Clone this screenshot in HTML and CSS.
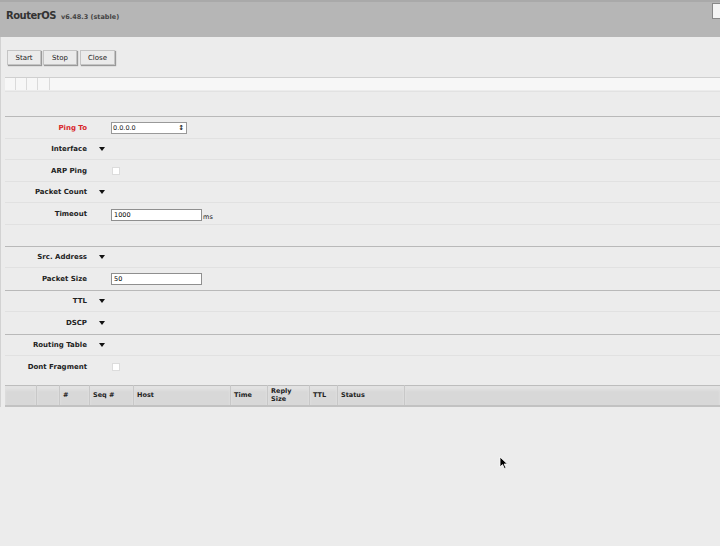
FILE: index.html
```html
<html>
<head>
    <meta charset="UTF-8">
    <title>RouterOS</title>
    <link rel="stylesheet" href="styles.css">
</head>
<body>

<header id="titlebar">
    <span class="brand">RouterOS</span>
    <span class="version">v6.48.3 (stable)</span>
    <div class="corner"></div>
</header>

<div id="page">
    <div class="buttons">
        <button type="button">Start</button>
        <button type="button">Stop</button>
        <button type="button">Close</button>
    </div>

    <div class="tabs">
        <span></span><span></span><span></span><span></span>
    </div>

    <div class="blank"></div>

    <form id="form">
        <div class="section">
            <div class="row">
                <label class="req">Ping To</label>
                <span></span>
                <div class="select"><span>0.0.0.0</span><i>&#8597;</i></div>
            </div>
            <div class="row">
                <label>Interface</label>
                <span class="tri"></span>
                <span></span>
            </div>
            <div class="row">
                <label>ARP Ping</label>
                <span></span>
                <span class="check"></span>
            </div>
            <div class="row">
                <label>Packet Count</label>
                <span class="tri"></span>
                <span></span>
            </div>
            <div class="row">
                <label>Timeout</label>
                <span></span>
                <div><input type="text" value="1000"> <span class="unit">ms</span></div>
            </div>
            <div class="row empty"></div>
        </div>

        <div class="section">
            <div class="row">
                <label>Src. Address</label>
                <span class="tri"></span>
                <span></span>
            </div>
            <div class="row">
                <label>Packet Size</label>
                <span></span>
                <div><input type="text" value="50"></div>
            </div>
        </div>

        <div class="section">
            <div class="row">
                <label>TTL</label>
                <span class="tri"></span>
                <span></span>
            </div>
            <div class="row">
                <label>DSCP</label>
                <span class="tri"></span>
                <span></span>
            </div>
        </div>

        <div class="section">
            <div class="row">
                <label>Routing Table</label>
                <span class="tri"></span>
                <span></span>
            </div>
            <div class="row">
                <label>Dont Fragment</label>
                <span></span>
                <span class="check"></span>
            </div>
        </div>
    </form>

    <table>
        <thead>
        <tr>
            <th class="c1"></th>
            <th class="c2"></th>
            <th class="c3">#</th>
            <th class="c4">Seq #</th>
            <th class="c5">Host</th>
            <th class="c6">Time</th>
            <th class="c7">Reply<br>Size</th>
            <th class="c8">TTL</th>
            <th class="c9">Status</th>
            <th></th>
        </tr>
        </thead>
    </table>
</div>

<svg class="cursor" width="10" height="14" viewBox="0 0 10 14">
    <path d="M1 1 L1 11 L3.5 8.6 L5.4 12.6 L7 11.9 L5.1 8 L8.4 8 Z" fill="#000" stroke="#fff" stroke-width="0.8"/>
</svg>

</body>
</html>
```

FILE: styles.css
```css
body {
    margin: 0;
    background-color: #ececec;
    font-family: "DejaVu Sans", Verdana, sans-serif;
    width: 720px;
    height: 546px;
    overflow: hidden;
    position: relative;
}

#titlebar {
    height: 37px;
    box-sizing: border-box;
    background-color: #b6b6b6;
    border-top: 2px solid #a9a9a9;
    padding: 2px 0 0 6px;
    position: relative;
}
.brand {
    font-size: 10px;
    font-weight: bold;
    color: #333;
    letter-spacing: -0.5px;
}
.version {
    font-size: 6.5px;
    font-weight: bold;
    color: #444;
}
.corner {
    position: absolute;
    right: 0;
    top: 1px;
    width: 7px;
    height: 14px;
    background: #f4f4f4;
    border: 1px solid #888;
    border-right: none;
}

#page {
    padding-left: 4px;
    border-left: 1px solid #d2d2d2;
}

.buttons {
    display: flex;
    gap: 2px;
    padding-top: 13px;
    padding-left: 2px;
    height: 16px;
}
.buttons button {
    font-family: "DejaVu Sans", Verdana, sans-serif;
    font-size: 7px;
    color: #222;
    background: #ebebeb;
    border: 1px solid #c4c4c4;
    box-shadow: 1px 1px 1px #999;
    height: 15px;
    padding: 0;
    width: 34px;
}
.buttons button:nth-child(3) {
    margin-left: 1px;
    width: 35px;
}

.tabs {
    margin-top: 11px;
    height: 12px;
    border-top: 1px solid #cfcfcf;
    background: #f7f7f7;
    display: flex;
}
.tabs span {
    width: 10px;
    border-right: 1px solid #dadada;
}
.tabs span:last-child {
    width: 11px;
}

.blank {
    height: 24px;
    border-top: 1px solid #e2e2e2;
    margin-top: 1px;
}

form {
    margin: 0;
}
.section {
    border-top: 1px solid #b9b9b9;
}
.row {
    display: grid;
    grid-template-columns: 82px 24px 1fr;
    align-items: center;
    height: 21.5px;
    border-bottom: 1px solid #e1e1e1;
    box-sizing: border-box;
    padding-top: 1px;
}
.section .row:last-child {
    border-bottom: none;
}
.row.empty {
    height: 21px;
}
.row label {
    text-align: right;
    font-size: 7px;
    font-weight: bold;
    color: #222;
}
.row label.req {
    color: #d8262a;
}

.tri {
    margin-left: 12px;
    width: 0;
    height: 0;
    border-left: 3.5px solid transparent;
    border-right: 3.5px solid transparent;
    border-top: 4px solid #111;
}

.check {
    margin-left: 1px;
    width: 6px;
    height: 6px;
    background: #fff;
    border: 1px solid #dcdcdc;
}

.select {
    width: 73px;
    height: 10px;
    background: #fff;
    border: 1px solid #999;
    display: flex;
    justify-content: space-between;
    align-items: center;
    font-size: 6.5px;
    color: #222;
    padding-left: 1px;
}
.select i {
    font-style: normal;
    font-size: 7px;
    font-weight: bold;
    padding-right: 2px;
}

.row input {
    width: 91px;
    height: 12px;
    box-sizing: border-box;
    border: 1px solid #8f8f8f;
    font-family: "DejaVu Sans", Verdana, sans-serif;
    font-size: 6.5px;
    padding: 0 2px;
    vertical-align: middle;
}
.unit {
    font-size: 6.5px;
    color: #222;
    margin-left: -4px;
}

table {
    margin-top: 7px;
    width: 715px;
    table-layout: fixed;
    border-collapse: collapse;
    background: #d8d8d8;
    border-top: 1px solid #bdbdbd;
    border-bottom: 2px solid #c2c2c2;
}
th {
    height: 21px;
    padding: 0 0 0 3px;
    text-align: left;
    font-size: 6.5px;
    font-weight: bold;
    color: #222;
    line-height: 8px;
    border-right: 1px solid #c8c8c8;
    box-shadow: inset 0 4px 3px #e2e2e2;
}
th:last-child {
    border-right: none;
}
.c1 { width: 28px; }
.c2 { width: 19px; }
.c3 { width: 26px; }
.c4 { width: 40px; }
.c5 { width: 93px; }
.c6 { width: 33px; }
.c7 { width: 38px; }
.c8 { width: 24px; }
.c9 { width: 63px; }

.cursor {
    position: absolute;
    left: 499px;
    top: 456px;
}
```
